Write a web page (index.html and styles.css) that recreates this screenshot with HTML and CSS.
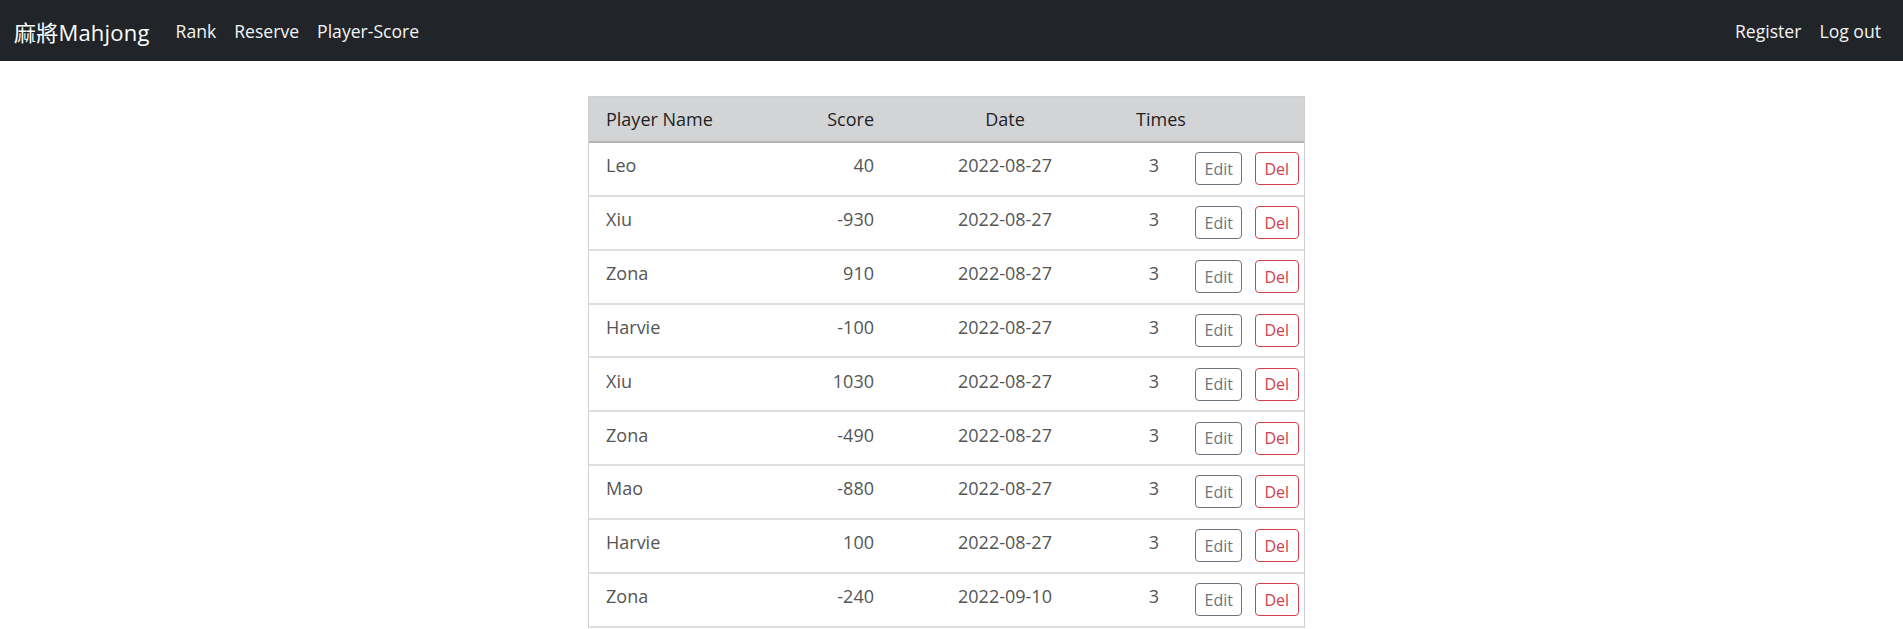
FILE: index.html
```html
<!DOCTYPE html>
<html lang="zh-Hant">
<head>
<meta charset="utf-8">
<title>麻將Mahjong - Player Score</title>
<link rel="stylesheet" href="styles.css">
</head>
<body>
<nav class="navbar">
  <a class="brand" href="#">麻將Mahjong</a>
  <ul class="nav-links">
    <li><a href="#">Rank</a></li>
    <li><a href="#">Reserve</a></li>
    <li><a href="#">Player-Score</a></li>
  </ul>
  <ul class="nav-links nav-right">
    <li><a href="#">Register</a></li>
    <li><a href="#">Log out</a></li>
  </ul>
</nav>
<main class="page">
  <div class="score-table">
    <div class="row head">
      <div class="c-name">Player Name</div>
      <div class="c-score">Score</div>
      <div class="c-date">Date</div>
      <div class="c-times">Times</div>
      <div class="c-act"></div>
    </div>
    <div class="row"><div class="c-name">Leo</div><div class="c-score">40</div><div class="c-date">2022-08-27</div><div class="c-times">3</div><div class="c-act"><button class="btn btn-edit">Edit</button><button class="btn btn-del">Del</button></div></div>
    <div class="row"><div class="c-name">Xiu</div><div class="c-score">-930</div><div class="c-date">2022-08-27</div><div class="c-times">3</div><div class="c-act"><button class="btn btn-edit">Edit</button><button class="btn btn-del">Del</button></div></div>
    <div class="row"><div class="c-name">Zona</div><div class="c-score">910</div><div class="c-date">2022-08-27</div><div class="c-times">3</div><div class="c-act"><button class="btn btn-edit">Edit</button><button class="btn btn-del">Del</button></div></div>
    <div class="row"><div class="c-name">Harvie</div><div class="c-score">-100</div><div class="c-date">2022-08-27</div><div class="c-times">3</div><div class="c-act"><button class="btn btn-edit">Edit</button><button class="btn btn-del">Del</button></div></div>
    <div class="row"><div class="c-name">Xiu</div><div class="c-score">1030</div><div class="c-date">2022-08-27</div><div class="c-times">3</div><div class="c-act"><button class="btn btn-edit">Edit</button><button class="btn btn-del">Del</button></div></div>
    <div class="row"><div class="c-name">Zona</div><div class="c-score">-490</div><div class="c-date">2022-08-27</div><div class="c-times">3</div><div class="c-act"><button class="btn btn-edit">Edit</button><button class="btn btn-del">Del</button></div></div>
    <div class="row"><div class="c-name">Mao</div><div class="c-score">-880</div><div class="c-date">2022-08-27</div><div class="c-times">3</div><div class="c-act"><button class="btn btn-edit">Edit</button><button class="btn btn-del">Del</button></div></div>
    <div class="row"><div class="c-name">Harvie</div><div class="c-score">100</div><div class="c-date">2022-08-27</div><div class="c-times">3</div><div class="c-act"><button class="btn btn-edit">Edit</button><button class="btn btn-del">Del</button></div></div>
    <div class="row"><div class="c-name">Zona</div><div class="c-score">-240</div><div class="c-date">2022-09-10</div><div class="c-times">3</div><div class="c-act"><button class="btn btn-edit">Edit</button><button class="btn btn-del">Del</button></div></div>
  </div>
</main>
</body>
</html>
```
FILE: styles.css
```css
* { box-sizing: border-box; }

body {
  margin: 0;
  font-family: "Open Sans", "Noto Sans CJK TC", sans-serif;
  background: #fff;
  color: #212529;
}

.navbar {
  display: flex;
  align-items: center;
  height: 61px;
  padding: 0 22px 0 14px;
  background: #212529;
}

.brand {
  font-size: 22px;
  letter-spacing: 0.2px;
  color: #fff;
  text-decoration: none;
  margin-right: 26px;
}

.nav-links {
  display: flex;
  gap: 18px;
  list-style: none;
  margin: 0;
  padding: 0;
}

.nav-links a {
  font-size: 17.6px;
  color: #f4f4f4;
  text-decoration: none;
}

.nav-right {
  margin-left: auto;
}

.page {
  display: flex;
  justify-content: center;
  padding: 35px 10px 0 0;
}

.score-table {
  width: 717px;
  border: 1px solid #d0d0d0;
  border-bottom: none;
}

.row {
  display: grid;
  grid-template-columns: 171px 124px 242px 64px 114px;
  align-items: center;
  height: 53.85px;
  border-bottom: 2px solid #dedede;
  font-size: 18px;
  color: #555;
}

.row > div:not(.c-act) { padding-bottom: 7px; }

.row.head {
  height: 46px;
  background: #d3d4d6;
  border-bottom: 2px solid #b4b4b4;
  font-size: 18px;
  color: #1f1f24;
}

.row.head > div { padding-bottom: 0; }

.c-name { padding-left: 17px; }
.c-score { text-align: right; padding-right: 10px; }
.c-date { text-align: center; }
.c-times { text-align: center; padding-right: 8px; }
.head .c-times { padding-right: 0; padding-left: 6px; }

.c-act {
  display: flex;
  gap: 12.5px;
  padding-left: 5px;
}

.btn {
  height: 33px;
  padding: 0 8.5px;
  font-family: "Open Sans", sans-serif;
  font-size: 16px;
  background: #fff;
  border-radius: 4px;
  border: 1px solid;
  cursor: pointer;
}

.btn-edit { color: #6c757d; border-color: #6c757d; }
.btn-del { color: #d2404e; border-color: #d2404e; }
```
